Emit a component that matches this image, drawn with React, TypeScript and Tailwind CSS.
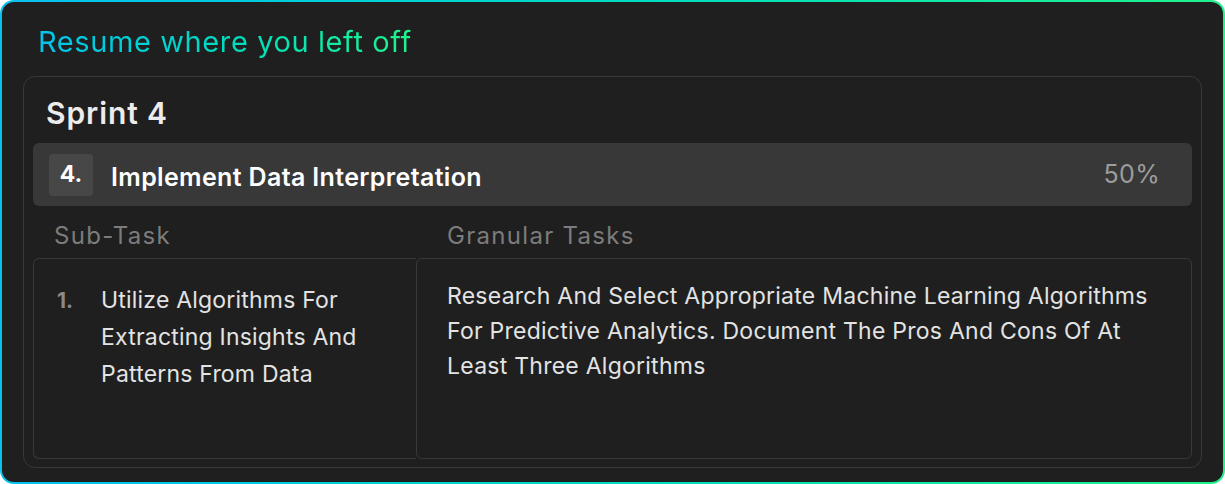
import React from 'react'

const task = {
  sprint: 'Sprint 4',
  index: 4,
  title: 'Implement Data Interpretation',
  progress: 50,
  subTask: 'Utilize Algorithms For Extracting Insights And Patterns From Data',
  granular:
    'Research And Select Appropriate Machine Learning Algorithms For Predictive Analytics. Document The Pros And Cons Of At Least Three Algorithms',
}

export default function App() {
  return (
    <div className="w-[1225px] h-[484px] bg-white font-['Inter',sans-serif]">
      <div className="h-full w-full rounded-[14px] p-[2px] bg-gradient-to-r from-[#0ac0ef] to-[#20f28a]">
        <div className="h-full w-full rounded-[12px] bg-[#1f1f1f] flex flex-col px-[21px] pb-[14px]">
          {/* heading */}
          <h1 className="pl-[15px] pt-[22px] h-[74px] text-[29px] tracking-[0.6px] leading-[36px] bg-gradient-to-r from-[#0ac0ef] to-[#20f28a] bg-clip-text text-transparent w-fit">
            Resume where you left off
          </h1>

          {/* sprint card */}
          <div className="flex-1 flex flex-col rounded-[12px] border border-[#383838] px-[9px] pb-[8px]">
            <div className="pl-[13px] pt-[18px] h-[66px] text-[30px] tracking-[0.9px] leading-[36px] font-semibold text-[#ececec]">
              {task.sprint}
            </div>

            <div className="h-[63px] rounded-[6px] bg-[#383838] flex items-center pl-[16px] pr-[32px]">
              <div className="w-[44px] h-[42px] rounded-[4px] bg-[#474747] flex items-center justify-center text-[23px] font-bold text-white">
                {task.index}.
              </div>
              <div className="ml-[18px] pt-[7px] text-[25px] tracking-[0.35px] font-semibold text-white">{task.title}</div>
              <div className="ml-auto text-[25px] tracking-[0.3px] text-[#9c9c9c]">{task.progress}%</div>
            </div>

            <div className="grid grid-cols-[383px_1fr] h-[52px] items-center pt-[8px] text-[24px] tracking-[1.3px] text-[#7c7c7c]">
              <div className="pl-[21px]">Sub-Task</div>
              <div className="pl-[31px]">Granular Tasks</div>
            </div>

            <div className="flex-1 grid grid-cols-[383px_1fr]">
              <div className="rounded-l-[6px] border-y border-l border-[#383838] flex pt-[23px] pl-[23px] pr-[20px]">
                <span className="w-[44px] shrink-0 text-[21px] font-bold text-[#8a8a8a] leading-[37px]">1.</span>
                <p className="text-[23px] tracking-[0.2px] leading-[37px] text-[#e3e3e3]">{task.subTask}</p>
              </div>
              <div className="rounded-[6px] border border-[#383838] pt-[20px] pl-[30px] pr-[32px]">
                <p className="text-[23px] tracking-[0.25px] leading-[35px] text-[#e3e3e3]">{task.granular}</p>
              </div>
            </div>
          </div>
        </div>
      </div>
    </div>
  )
}
